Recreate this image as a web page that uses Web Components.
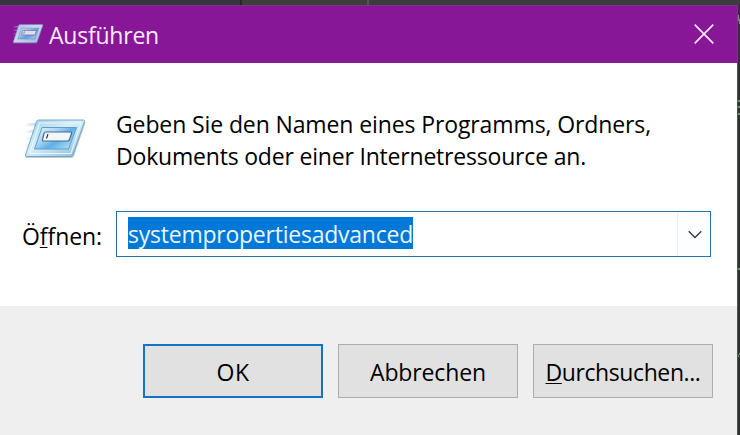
<!DOCTYPE html>
<html lang="de">
<head>
<meta charset="utf-8">
<title>Ausführen</title>
<style>
html,body{margin:0;height:435px;overflow:hidden;background:#333236}
body{font:23px/32px "Open Sans","Noto Sans",sans-serif;color:#000}
</style>
</head>
<body>
<run-desktop>
  <run-dialog></run-dialog>
</run-desktop>
<script>
const define = (name, html, init) => customElements.define(name, class extends HTMLElement {
  connectedCallback() {
    if (this.shadowRoot) return;
    const t = document.createElement('template');
    t.innerHTML = html;
    this.attachShadow({mode: 'open'}).append(t.content.cloneNode(true));
    if (init) init(this);
  }
});

// One line of text whose tracking is set so that it has the advance width given in "w".
define('fit-text', `<style>
:host{display:block;white-space:pre}
span{display:inline-block}
</style><span><slot></slot></span>`, el => {
  const span = el.shadowRoot.querySelector('span');
  const natural = span.getBoundingClientRect().width;
  const nodes = el.shadowRoot.querySelector('slot').assignedNodes({flatten: true});
  const n = nodes.map(x => x.textContent).join('').length || 1;
  span.style.letterSpacing = ((+el.getAttribute('w') - natural) / n).toFixed(3) + 'px';
});

define('run-icon', `<style>
:host{display:block}
svg{display:block;width:100%;height:100%}
</style>
<svg viewBox="0 0 64 42" preserveAspectRatio="none">
<defs>
<linearGradient id="f" x1="0" y1="0" x2="1" y2="1"><stop offset="0" stop-color="#9fcdea"/><stop offset=".45" stop-color="#d8effa"/><stop offset="1" stop-color="#86b9dc"/></linearGradient>
<linearGradient id="p" x1="0" y1="0" x2="1" y2=".7"><stop offset="0" stop-color="#eaf6fd"/><stop offset=".4" stop-color="#a8d6f5"/><stop offset=".65" stop-color="#5fb0e6"/><stop offset="1" stop-color="#a9dcf7"/></linearGradient>
<linearGradient id="s"><stop offset="0" stop-color="#b5d9ee" stop-opacity="0"/><stop offset="1" stop-color="#9fcdec"/></linearGradient>
</defs>
<g fill="url(#s)"><path d="M1 4h16l-1 3H1zM2 11h13l-1 3H2zM1 18h12l-1 3H1zM2 25h9l-1 3H2zM1 32h8l-1 3H1z"/></g>
<path d="M15.500 2.500H61.500Q63 2.500 62.500 4L51 37Q50.500 39 48.500 39H4Q2 39 2.500 37L13.500 4Q14 2.500 15.500 2.500Z" fill="#788b96" opacity=".45"/>
<path d="M15.500 1H60.500Q62 1 61.500 2.500L50 36Q49.500 37.500 48 37.500H4Q2 37.500 2.500 36L13.500 2.500Q14 1 15.500 1Z" fill="url(#f)" stroke="#6ca2c0" stroke-width=".9"/>
<path d="M16.500 4H58L48 34.500H6.500Z" fill="none" stroke="#e6f6fd" stroke-width="1.100"/>
<path d="M19 8.500H53.500L45.500 30H11.500Z" fill="url(#p)" stroke="#5b9fcb"/>
<path d="M22.500 13H47.500Q49 13 48.500 14.500L46.500 20.500Q46 22 44.500 22H20.500Q19 22 19.500 20.500L21 14.500Q21.500 13 22.500 13Z" fill="#f1f7fa" stroke="#476f8d" stroke-width="1.200"/>
<path d="M25 15L23.500 19.500" stroke="#25333c" stroke-width="1.100"/>
</svg>`);

define('title-bar', `<style>
:host{display:flex;box-sizing:border-box;height:58px;background:#881798;color:#fbeafd;border-top:1px solid #7b3387;align-items:flex-start;padding:0 23px 0 12px}
run-icon{width:32px;height:21px;margin-top:18px;opacity:.88}
fit-text{margin:13px 0 0 5px;flex:1}
svg{display:block;width:20px;height:20px;margin-top:18px}
</style>
<run-icon></run-icon><fit-text w="110"><slot></slot></fit-text>
<svg viewBox="0 0 20 20"><path d="M.7.700L19.300 19.300M19.300.700L.7 19.300" stroke="#fbeafd" stroke-width="1.700" fill="none"/></svg>`);

define('combo-box', `<style>
:host{display:flex;box-sizing:border-box;width:595px;height:46px;border:1px solid #2471ad;background:#fff;align-items:stretch}
.v{flex:1;padding:5px 0 0 11px}
.sel{width:285px;height:32px;background:#0078d7;color:#eaf6ff;line-height:34px}
.b{width:32px;border-left:1px solid #e6eff5;background:#fcfeff;display:grid;place-items:center}
svg{display:block;width:14px;height:9px;margin-left:1px}
</style>
<div class="v"><div class="sel"><fit-text w="285"><slot></slot></fit-text></div></div>
<div class="b"><svg viewBox="0 0 14 9"><path d="M.7 1.200L7 7.500L13.300 1.200" fill="none" stroke="#35373a" stroke-width="1.300"/></svg></div>`);

define('push-button', `<style>
:host{display:flex;box-sizing:border-box;width:180px;height:54px;border:1px solid #adadad;background:#e1e1e1;justify-content:center;align-items:center}
:host([default]){border:2px solid #1274c4}
</style><slot></slot>`);

define('run-dialog', `<style>
:host{display:flex;flex-direction:column;box-sizing:border-box;width:738px;height:430px;border-right:1px solid #81318c;background:#fff}
.content{height:243px;box-sizing:border-box;padding-top:45px}
.intro{display:flex;height:103px}
.intro run-icon{width:64px;height:42px;margin:11px 0 0 23px}
.intro div{margin-left:29px}
.row{display:flex}
.row .label{width:94px;padding:9px 0 0 22px}
u{text-decoration-thickness:1px;text-underline-offset:2px;text-decoration-skip-ink:none}
footer{flex:1;background:#efefef;display:flex;gap:15px;padding:38px 0 0 143px}
fit-text.b{padding-top:1px}
</style>
<title-bar>Ausführen</title-bar>
<div class="content">
  <div class="intro"><run-icon></run-icon><div>
    <fit-text w="535">Geben Sie den Namen eines Programms, Ordners,</fit-text>
    <fit-text w="470">Dokuments oder einer Internetressource an.</fit-text>
  </div></div>
  <div class="row"><fit-text class="label" w="80">Ö<u>f</u>fnen:</fit-text><combo-box>systempropertiesadvanced</combo-box></div>
</div>
<footer>
  <push-button default><fit-text class="b" w="33">OK</fit-text></push-button>
  <push-button><fit-text class="b" w="116">Abbrechen</fit-text></push-button>
  <push-button><fit-text class="b" w="155"><u>D</u>urchsuchen...</fit-text></push-button>
</footer>`);

define('run-desktop', `<style>
:host{display:grid;grid-template-columns:738px 2px;grid-template-rows:5px 430px;width:740px;height:435px}
.top{grid-column:1/3;background:linear-gradient(90deg,#34363c 0 240px,#262826 240px 242px,#3d3e3b 242px 367px,#555 367px 369px,#3b3b3b 369px)}
svg{display:block}
</style>
<div class="top"></div><slot></slot>
<svg width="2" height="430"><path fill="#303033" d="M0 0h2v430H0z"/><path fill="#789078" d="M0 10h1v6H0zM1 14h1v5H1zM0 95h2v2H0zM0 101h2v2H0zM0 108h2v2H0zM0 263h2v2H0zM0 350h1v2H0zM1 348h1v2H1z"/></svg>`);
</script>
</body>
</html>
